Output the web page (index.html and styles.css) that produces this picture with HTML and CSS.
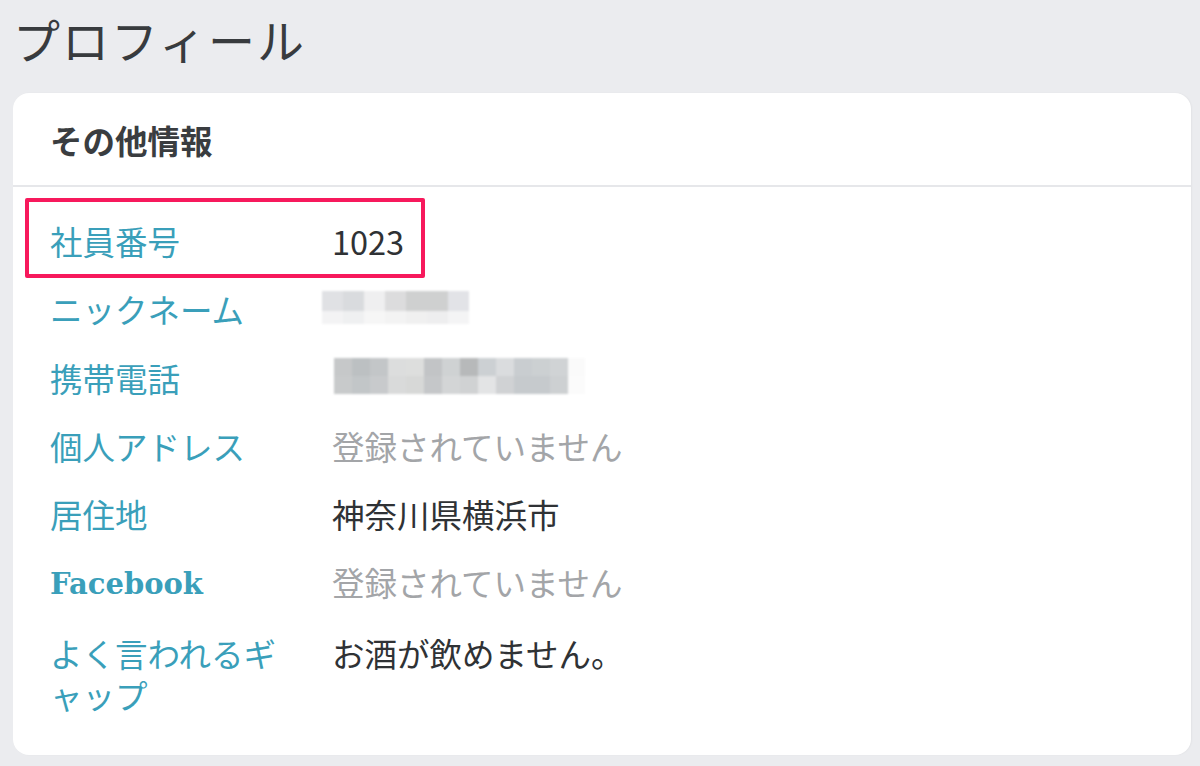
FILE: index.html
```html
<!DOCTYPE html>
<html lang="ja">
<head>
<meta charset="utf-8">
<link rel="stylesheet" href="styles.css">
</head>
<body>
<div class="page">
  <h1 class="title">プロフィール</h1>
  <section class="card">
    <header class="card-head">その他情報</header>
    <div class="card-body">
      <div class="row highlighted">
        <div class="label">社員番号</div>
        <div class="value">1023</div>
        <div class="mark"></div>
      </div>
      <div class="row">
        <div class="label">ニックネーム</div>
        <div class="value">
          <div class="mosaic nick">
            <span style="background:#e0e1e4"></span><span style="background:#d9dbde"></span><span style="background:#efeff0"></span><span style="background:#dcdcdd"></span><span style="background:#cfd0d0"></span><span style="background:#cfd0d0"></span><span style="background:#e2e3e7"></span>
            <span style="background:#f3f3f4"></span><span style="background:#eff0f1"></span><span style="background:#f6f6f6"></span><span style="background:#f3f3f3"></span><span style="background:#f0f0f0"></span><span style="background:#eeeeef"></span><span style="background:#f4f4f5"></span>
          </div>
        </div>
      </div>
      <div class="row">
        <div class="label">携帯電話</div>
        <div class="value">
          <div class="mosaic phone">
            <span style="background:#c6c8c9"></span><span style="background:#bcc0c2"></span><span style="background:#c3c6c8"></span><span style="background:#dcdddd"></span><span style="background:#dddedd"></span><span style="background:#c2c4c6"></span><span style="background:#cfd2d3"></span><span style="background:#b7b9ba"></span><span style="background:#ccd0d3"></span><span style="background:#dadcde"></span><span style="background:#c9cdd0"></span><span style="background:#ccd0d2"></span><span style="background:#d0d3d5"></span><span style="background:#fafafa"></span>
            <span style="background:#c8cacb"></span><span style="background:#c2c6c8"></span><span style="background:#c8cacc"></span><span style="background:#d9dada"></span><span style="background:#d7d8d7"></span><span style="background:#c5c7c9"></span><span style="background:#d3d5d6"></span><span style="background:#d0d2d3"></span><span style="background:#e3e4e5"></span><span style="background:#d0d2d4"></span><span style="background:#c6cacd"></span><span style="background:#c6cacd"></span><span style="background:#cdd0d2"></span><span style="background:#fbfbfb"></span>
          </div>
        </div>
      </div>
      <div class="row">
        <div class="label">個人アドレス</div>
        <div class="value muted">登録されていません</div>
      </div>
      <div class="row">
        <div class="label">居住地</div>
        <div class="value">神奈川県横浜市</div>
      </div>
      <div class="row">
        <div class="label latin">Facebook</div>
        <div class="value muted">登録されていません</div>
      </div>
      <div class="row">
        <div class="label">よく言われるギャップ</div>
        <div class="value">お酒が飲めません。</div>
      </div>
    </div>
  </section>
</div>
</body>
</html>
```

FILE: styles.css
```css
* { box-sizing: border-box; }
html, body {
  margin: 0;
  padding: 0;
  background: #ebecef;
}
body {
  font-family: "Noto Sans CJK JP", "Noto Sans", sans-serif;
  color: #333;
}
.page {
  width: 1200px;
  height: 766px;
  padding: 7px 9px 11px 13px;
  display: flex;
  flex-direction: column;
}
.title {
  margin: 0 0 22px 0;
  font-size: 47px;
  font-weight: 400;
  line-height: 64px;
  color: #383b3e;
  letter-spacing: 2px;
}
.card {
  background: #fff;
  border-radius: 16px;
  flex: 1;
  display: flex;
  flex-direction: column;
  box-shadow: 1px 0 2px rgba(0,0,0,0.04);
}
.card-head {
  height: 94px;
  padding-left: 37px;
  display: flex;
  align-items: center;
  font-size: 32.5px;
  font-weight: 700;
  color: #3a3d40;
  border-bottom: 2px solid #e6e7ea;
}
.card-body {
  padding: 33px 37px 30px;
  display: flex;
  flex-direction: column;
  gap: 26.3px;
}
.row {
  display: flex;
  gap: 42px;
  font-size: 32.5px;
  line-height: 42px;
  position: relative;
}
.label {
  width: 240px;
  flex: none;
  color: #3a9fba;
}
.label.latin {
  font-family: "DejaVu Serif", "Liberation Serif", serif;
  font-weight: 700;
  font-size: 29px;
  letter-spacing: 0;
  padding-top: 2px;
}
.value {
  color: #2f3235;
}
.value.muted { color: #a3a5a8; }
.mark {
  position: absolute;
  left: -25px;
  top: -22px;
  width: 400px;
  height: 80px;
  border: 4px solid #f7195c;
  border-radius: 2px;
}
.mosaic {
  display: grid;
  filter: blur(1.2px);
}
.mosaic span { display: block; }
.mosaic.nick {
  margin: 3px 0 0 -10px;
  grid-template-columns: repeat(7, 21px);
  grid-template-rows: 20px 13px;
}
.mosaic.phone {
  margin: 1px 0 0 2px;
  grid-template-columns: repeat(13, 18px) 17px;
  grid-template-rows: 18px 18px;
}
```
